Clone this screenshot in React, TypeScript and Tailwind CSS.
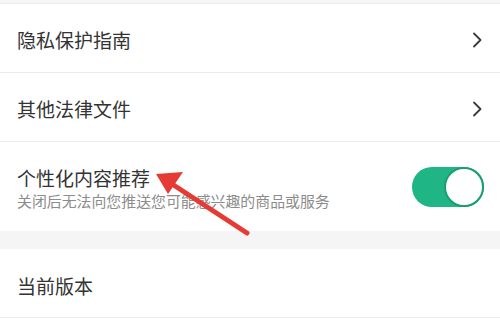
function Chevron() {
  return (
    <svg width="12" height="18" viewBox="0 0 12 18" fill="none">
      <path d="M3 2.5 L9.5 9 L3 15.5" stroke="#3a3a3a" strokeWidth="1.8" strokeLinecap="round" strokeLinejoin="round" />
    </svg>
  );
}

function LinkRow({ label }: { label: string }) {
  return (
    <div className="flex h-[69px] items-center justify-between border-b border-[#ececec] bg-white pl-[17px] pr-[17px] pt-[4px]">
      <span className="text-[19px] text-[#333333]">{label}</span>
      <Chevron />
    </div>
  );
}

export default function App() {
  return (
    <div
      className="relative h-[321px] w-[500px] overflow-hidden bg-white"
      style={{ fontFamily: '"Noto Sans CJK SC", "Noto Sans", sans-serif' }}
    >
      <div className="h-[4px] border-b border-[#ececec] bg-[#f6f6f6]" />
      <LinkRow label="隐私保护指南" />
      <LinkRow label="其他法律文件" />

      {/* Personalised recommendation toggle */}
      <div className="flex h-[89px] items-center justify-between bg-white pl-[17px] pr-[16px]">
        <div className="flex flex-col pt-[2px]">
          <span className="text-[19px] leading-[26px] text-[#333333]">个性化内容推荐</span>
          <span className="text-[14.9px] leading-[20px] text-[#8c8c8c]">关闭后无法向您推送您可能感兴趣的商品或服务</span>
        </div>
        <div className="flex h-[40px] w-[72px] items-center justify-end rounded-full bg-[#1fb584]">
          <div className="h-[40px] w-[40px] rounded-full border-2 border-[#1a9e73] bg-white" />
        </div>
      </div>

      <div className="h-[18px] bg-[#f5f5f5]" />

      <div className="flex h-[69px] items-center border-b border-[#ececec] bg-white pl-[17px] pt-[6px]">
        <span className="text-[19px] text-[#333333]">当前版本</span>
      </div>

      {/* Red annotation arrow */}
      <svg className="absolute left-0 top-0" width="500" height="321" viewBox="0 0 500 321">
        <line x1="247" y1="233" x2="172" y2="184" stroke="#e63b35" strokeWidth="5" strokeLinecap="round" />
        <polygon points="156,174 183,172 168,194" fill="#e63b35" />
      </svg>
    </div>
  );
}
